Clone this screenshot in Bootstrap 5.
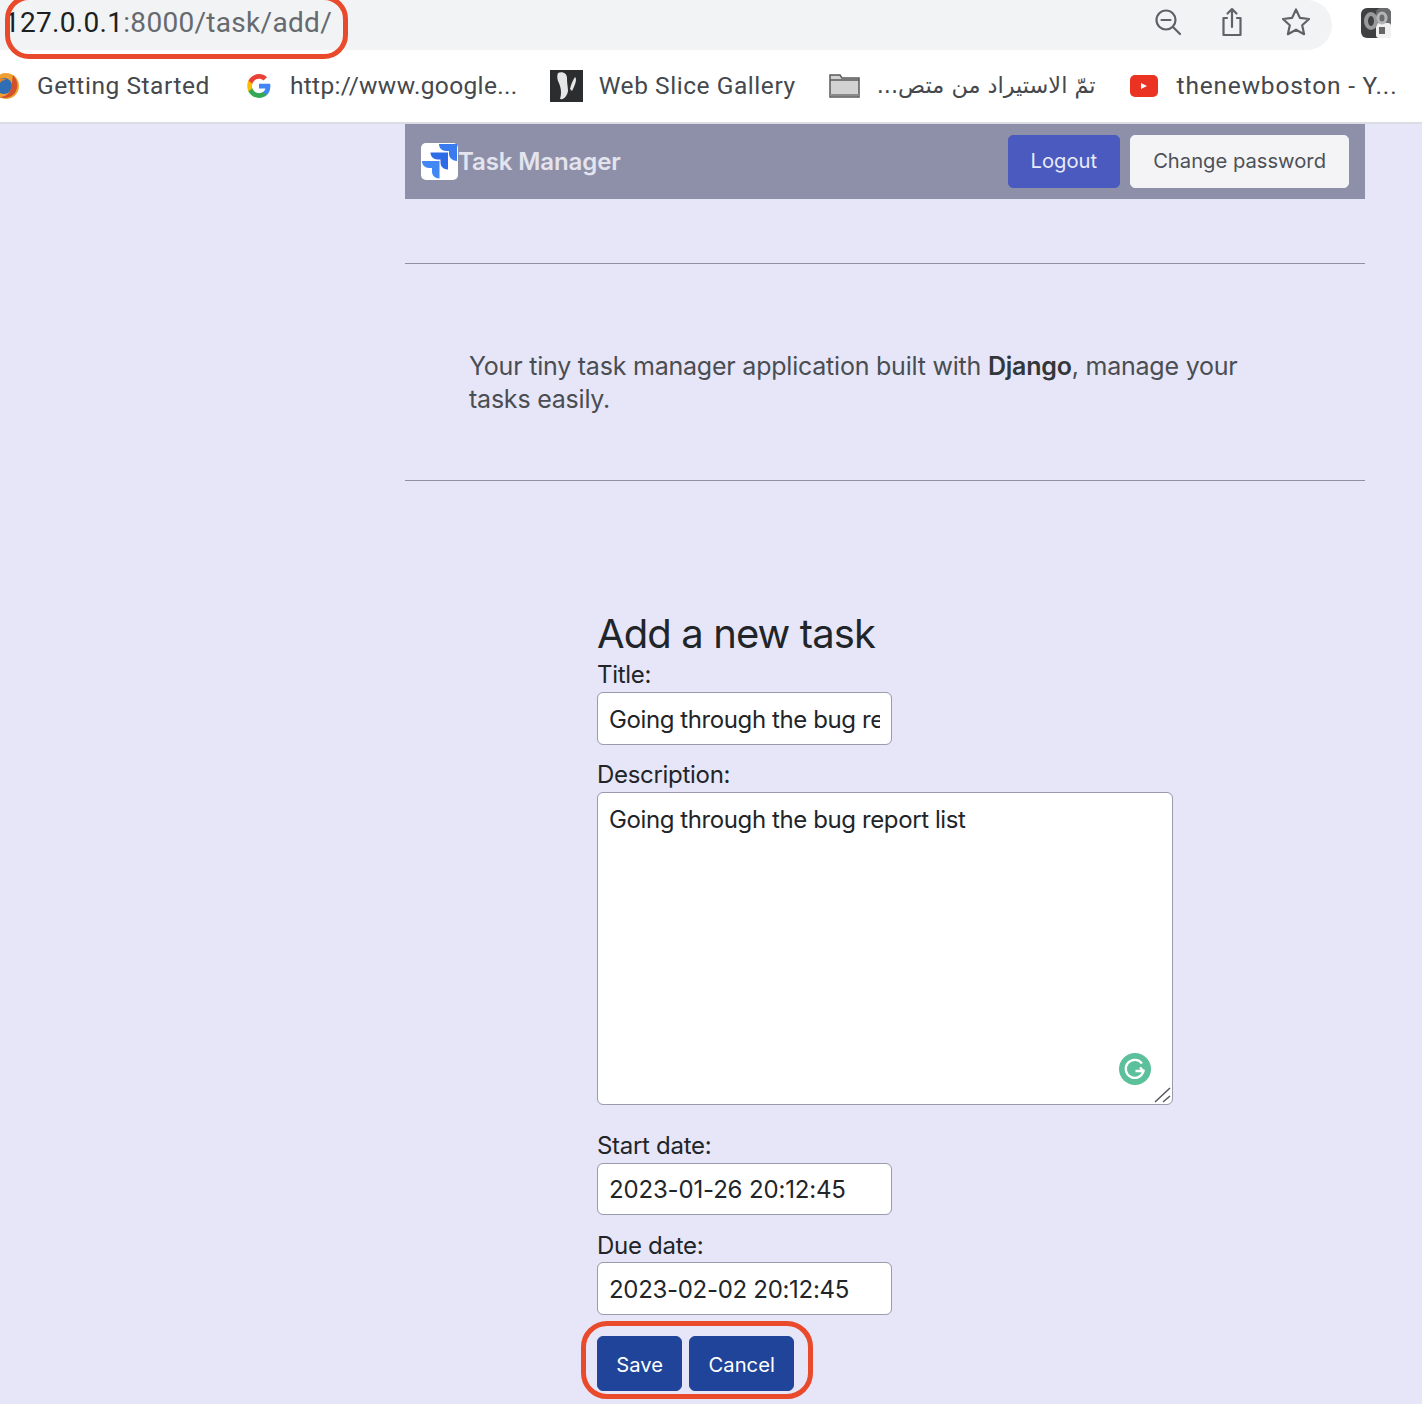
<!doctype html>
<html lang="en">
<head>
<meta charset="utf-8">
<title>Task Manager</title>
<link href="https://cdn.jsdelivr.net/npm/bootstrap@5.3.0/dist/css/bootstrap.min.css" rel="stylesheet">
<style>
html,body{height:1404px;overflow:hidden}
body{background:#e6e6f8;font-family:Inter,"Noto Sans",sans-serif;color:#212529;position:relative}
.urlstrip{height:50px;background:#fff}
.urlpill{height:50px;width:1332px;background:#f1f3f5;border-radius:0 25px 25px 0;padding-left:4px;padding-right:20px;padding-bottom:4px}
.urltext{font-size:28px;letter-spacing:.3px;color:#66696d;line-height:44px;font-family:Roboto,sans-serif}
.urltext b{font-weight:400;color:#1d1f21}
.tool{width:32px;height:32px}
.tools{gap:32px;margin-top:-2px}
.extico{position:absolute;left:1361px;top:8px}
.bookbar{height:74px;background:#fff;border-bottom:2px solid #dcdde3;font-size:24.5px;color:#45484c;font-family:Roboto,sans-serif;letter-spacing:.55px;overflow:hidden}
.bm{gap:18px;white-space:nowrap;flex:none}
.bm svg{flex:none}
.bm1{margin-left:-8px;gap:17px}
.bm2{margin-left:36px}
.bm2 span{letter-spacing:.35px}
.bm3{margin-left:32px}
.bm3 span{margin-left:-2px}
.bm4{margin-left:33px}
.bm4 span{font-family:"DejaVu Sans",sans-serif;font-size:22.4px;letter-spacing:0;width:218px;display:inline-block;overflow:hidden}
.bm5{margin-left:34px;gap:19px}
.bm5 span{letter-spacing:.8px}
.main{width:960px;margin-left:405px}
.topnav{height:75px;background:#8e90aa;padding:0 16px 0 16px}
.brandname{color:#e4e4ee;font-weight:600;font-size:24px;letter-spacing:-.1px}
.btnrow{gap:10px}
.btn.logoutb{background:#4a5abf;border-color:#4a5abf;color:#e8eaf8}
.btn.changeb{background:#f4f4f6;border-color:#f4f4f6;color:#4d5156}
.btn.logoutb,.btn.changeb{height:53px;font-size:20.2px;padding:0 22px;border-radius:5px}
.spacer64{height:64px}
.rule{margin:0;border:0;border-top:1px solid #8f90a0;opacity:1}
.introblock{padding:86px 64px 0;height:216px;font-size:25px;line-height:33px;color:#4a4d52;letter-spacing:-.22px}
.introblock b{font-weight:600;color:#33363a}
.formwrap{padding:128px 0 0 192px;width:768px}
.formtitle{font-size:40px;line-height:50px;font-weight:400;margin:0;letter-spacing:-.9px}
.flabel{display:block;font-size:24px;line-height:31px;height:33px;margin:0;letter-spacing:-.3px}
.flabel.lab32{height:32px}
.form-control.finput{width:295px;height:53px;font-size:24px;padding:1px 11px 0;border:1px solid #9a9bad;border-radius:6px;color:#212529;box-shadow:none;margin-bottom:14px;letter-spacing:-.4px}
.textwrap{position:relative;width:576px;height:313px;margin-bottom:25px}
.form-control.farea{width:576px;height:313px;font-size:24px;line-height:34px;padding:10px 11px;border:1px solid #9a9bad;border-radius:6px;color:#212529;resize:none;letter-spacing:-.4px}
.gramm{position:absolute;left:522px;top:261px}
.grip{position:absolute;left:556px;top:294px}
.form-control.date1{height:52px;padding-top:0;margin-bottom:15px;letter-spacing:-.16px}
.form-control.date2{margin-bottom:21px;letter-spacing:-.3px}
.fbtns{gap:7px}
.btn.fbtn{background:#1f4499;border-color:#1f4499;color:#fff;height:55px;font-size:20.2px;padding:3px 18.3px 0;border-radius:6px}
.ringmark{position:absolute;border:5px solid #ea4a2c;background:transparent;pointer-events:none}
.ring1{left:5px;top:-5px;width:343px;height:64px;border-radius:24px}
.ring2{left:581px;top:1321px;width:232px;height:78px;border-radius:26px}
</style>
</head>
<body>
<div class="urlstrip">
  <div class="urlpill d-flex align-items-center justify-content-between">
    <div class="urltext"><b>127.0.0.1</b>:8000/task/add/</div>
    <div class="d-flex align-items-center tools">
      <svg class="tool" viewBox="0 0 32 32" fill="none" stroke="#5f6368" stroke-width="2.2" stroke-linecap="round"><circle cx="14" cy="14" r="9.5"/><path d="M9.5 14h9M21 21l7 7"/></svg>
      <svg class="tool" viewBox="0 0 32 32" fill="none" stroke="#5f6368" stroke-width="2.2" stroke-linecap="round" stroke-linejoin="round"><path d="M11 12H7.5v17h17V12H21M16 21V3M11.5 7.5 16 3l4.5 4.5"/></svg>
      <svg class="tool" viewBox="0 0 32 32" fill="none" stroke="#5f6368" stroke-width="2.2" stroke-linejoin="round"><path d="M16 3.5l3.9 8.4 9.1 1.1-6.8 6.2 1.9 9L16 23.7 7.900 28.200l1.900-9L3 13l9.100-1.100z"/></svg>
    </div>
  </div>
</div>
<svg class="extico" width="30" height="30" viewBox="0 0 30 30"><rect width="30" height="30" rx="6" fill="#3f4042"/><rect x="15" y="0" width="15" height="30" rx="5" fill="#6a6b6d"/><rect x="15" y="15" width="15" height="15" rx="3" fill="#f1f1f1"/><ellipse cx="10" cy="13" rx="5" ry="7" fill="none" stroke="#9a9a9a" stroke-width="4"/><ellipse cx="21" cy="10" rx="4" ry="5" fill="none" stroke="#b5b5b5" stroke-width="3"/><rect x="18" y="19" width="6" height="7" fill="#666"/></svg>

<div class="bookbar d-flex align-items-center">
  <div class="bm bm1 d-flex align-items-center">
    <svg width="28" height="28" viewBox="0 0 28 28"><circle cx="14" cy="14" r="13" fill="#f0a030"/><circle cx="12" cy="14" r="8" fill="#2f6db5"/><path d="M21 3c5 5 6 13 1 19-4 4-10 5-15 3 6 0 11-3 12-9 1-4 1-8 2-13z" fill="#d2502a"/><path d="M6 8c3-2 6-2 8 0-3 0-5 1-6 3z" fill="#e8822a"/></svg>
    <span>Getting Started</span>
  </div>
  <div class="bm bm2 d-flex align-items-center">
    <svg width="26" height="26" viewBox="0 0 48 48"><path fill="#4285f4" d="M45 24.500c0-1.600-.1-3.100-.4-4.500H24v8.500h11.800c-.5 2.700-2 5-4.400 6.600v5.500h7.100C42.700 36.700 45 31.100 45 24.500z"/><path fill="#34a853" d="M24 46c5.900 0 10.900-2 14.500-5.300l-7.100-5.500c-2 1.300-4.500 2.100-7.400 2.100-5.700 0-10.500-3.800-12.200-9H4.500v5.700C8.100 41.100 15.500 46 24 46z"/><path fill="#fbbc05" d="M11.800 28.300c-.9-2.700-.9-5.900 0-8.600V14H4.500c-3 6-3 14 0 20z"/><path fill="#ea4335" d="M24 10.700c3.200 0 6.100 1.100 8.400 3.300l6.300-6.300C34.900 4.100 29.900 2 24 2 15.500 2 8.100 6.900 4.500 14l7.300 5.700c1.700-5.200 6.500-9 12.200-9z"/></svg>
    <span>http://www.google...</span>
  </div>
  <div class="bm bm3 d-flex align-items-center">
    <svg width="33" height="32" viewBox="0 0 33 32"><rect width="33" height="32" fill="#2b2d2f"/><path d="M8 3c4-2 9 0 9 5 0 6 1 9 1 13-1 5-4 9-8 8 2-6 1-12-2-18C7 8 7 5 8 3zM25 7c2 2 1 6-3 14l-2-2c1-5 3-9 5-12z" fill="#e6e6e6"/></svg>
    <span>Web Slice Gallery</span>
  </div>
  <div class="bm bm4 d-flex align-items-center">
    <svg width="31" height="24" viewBox="0 0 31 24"><path d="M1 1h10l2 3h17v19H1z" fill="#d2d2d2" stroke="#5a5a5a" stroke-width="1.500"/><path d="M1 6h29" stroke="#5a5a5a" stroke-width="1.500"/><path d="M1 21h29" stroke="#8a8a8a" stroke-width="2"/></svg>
    <span dir="rtl">تمّ الاستيراد من متص...</span>
  </div>
  <div class="bm bm5 d-flex align-items-center">
    <svg width="28" height="22" viewBox="0 0 28 22"><rect width="28" height="22" rx="5" fill="#ea3323"/><path d="M11 8l6 3-6 3z" fill="#fff"/></svg>
    <span>thenewboston - Y...</span>
  </div>
</div>

<div class="main">
  <nav class="topnav d-flex align-items-center justify-content-between">
    <div class="d-flex align-items-center">
      <svg width="37" height="37" viewBox="0 0 37 37"><rect width="37" height="37" rx="5" fill="#fff"/><path d="M36 1H18c0 4 3 7 7 7h3v3c0 4 4 7 8 7z" fill="#3a7bf0"/><path d="M27 9.500H9.500c0 4 3 7 7 7h3v3c0 4 3 7 7.500 7z" fill="#2e6be6"/><path d="M18.500 18H1c0 4 3 7 7 7h3v3.500c0 4 3 7 7.500 7z" fill="#4288f5"/></svg>
      <span class="brandname">Task Manager</span>
    </div>
    <div class="d-flex btnrow">
      <a class="btn logoutb d-inline-flex align-items-center" href="#">Logout</a>
      <a class="btn changeb d-inline-flex align-items-center" href="#">Change password</a>
    </div>
  </nav>
  <div class="spacer64"></div>
  <hr class="rule">
  <div class="introblock">Your tiny task manager application built with <b>Django</b>, manage your tasks easily.</div>
  <hr class="rule">
  <form class="formwrap">
    <h2 class="formtitle">Add a new task</h2>
    <label class="flabel" for="t1">Title:</label>
    <input id="t1" class="form-control finput" value="Going through the bug report list">
    <label class="flabel" for="t2">Description:</label>
    <div class="textwrap">
      <textarea id="t2" class="form-control farea">Going through the bug report list</textarea>
      <svg class="gramm" width="32" height="32" viewBox="0 0 32 32"><circle cx="16" cy="16" r="16" fill="#5cc09a"/><path d="M23 10.500A9 9 0 1 0 24.500 18H16.500M24.500 18l-3.500-3.500" fill="none" stroke="#fff" stroke-width="2.400"/></svg>
      <svg class="grip" width="18" height="18" viewBox="0 0 18 18" fill="none" stroke="#55565e" stroke-width="1.500"><path d="M2 16 17 2M10 16l7-6"/></svg>
    </div>
    <label class="flabel" for="t3">Start date:</label>
    <input id="t3" class="form-control finput date1" value="2023-01-26 20:12:45">
    <label class="flabel lab32" for="t4">Due date:</label>
    <input id="t4" class="form-control finput date2" value="2023-02-02 20:12:45">
    <div class="d-flex fbtns">
      <button type="button" class="btn fbtn">Save</button>
      <button type="button" class="btn fbtn">Cancel</button>
    </div>
  </form>
</div>
<div class="ringmark ring1"></div>
<div class="ringmark ring2"></div>
<script src="https://cdn.jsdelivr.net/npm/bootstrap@5.3.0/dist/js/bootstrap.bundle.min.js"></script>
</body>
</html>
